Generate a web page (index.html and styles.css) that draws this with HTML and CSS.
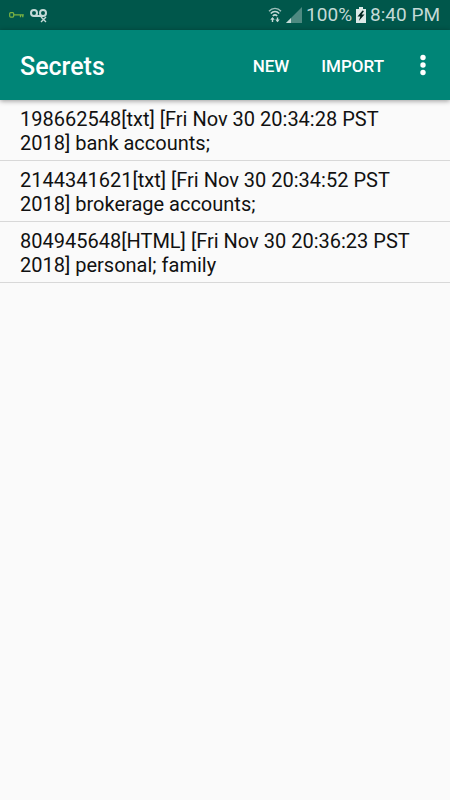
FILE: index.html
```html
<!DOCTYPE html>
<html lang="en">
<head>
<meta charset="utf-8">
<meta name="viewport" content="width=device-width, initial-scale=1">
<title>Secrets</title>
<link rel="stylesheet" href="styles.css">
</head>
<body>
<div class="status">
  <div class="status-group notifications">
    <svg class="icon" width="16" height="8" viewBox="0 0 16 8" fill="none" stroke="#7cb342" aria-hidden="true">
      <rect x=".7" y="1.7" width="4" height="4.4" rx="1" stroke-width="1.2"/>
      <path d="M5 3.8H14.8M11.5 4v2.2M13.8 4v2.2" stroke-width="1.3"/>
    </svg>
    <svg class="icon" width="18" height="16" viewBox="0 0 18 16" fill="none" stroke="#c4dad7" aria-hidden="true">
      <circle cx="4" cy="6" r="3" stroke-width="2"/>
      <circle cx="13" cy="6" r="3" stroke-width="2"/>
      <path d="M4 9h9" stroke-width="2"/>
      <path d="M11 10l5 5M16 10l-5 5" stroke-width="1.4"/>
    </svg>
  </div>
  <div class="status-group">
    <svg class="icon" width="14" height="18" viewBox="0 0 14 18" fill="none" stroke="#c4dad7" aria-hidden="true">
      <path d="M1 5.2C4.3 1.4 9.7 1.4 13 5.2" stroke-width="1.3" opacity=".8"/>
      <path d="M2.8 7.6C5.2 4.9 8.8 4.9 11.2 7.6" stroke-width="1.5"/>
      <path d="M4.8 10C6.2 8.6 7.8 8.6 9.2 10" stroke-width="1.6"/>
      <path d="M4.5 12v4M9.5 11.5v4" stroke-width="1.4"/>
      <path d="M2.3 13.7h4.4L4.5 11zM7.3 13.5h4.4L9.5 16.3z" fill="#c4dad7" stroke="none"/>
    </svg>
    <svg class="icon signal" width="16" height="16" viewBox="0 0 16 16" aria-hidden="true">
      <path d="M16 0v16H0z" fill="#4e8a81"/>
      <path d="M5 11v5H0z" fill="#c4dad7"/>
    </svg>
    <span>100%</span>
    <svg class="icon battery" width="10" height="16" viewBox="0 0 10 16" aria-hidden="true">
      <path d="M3 0h4v2h3v14H0V2h3z" fill="#dce9e7"/>
      <path d="M6.5 3.5L1.5 9.4h2.8L2.8 14 8.5 7.6H5.6L8 4z" fill="#00251f"/>
    </svg>
    <span>8:40 PM</span>
  </div>
</div>
<header class="toolbar">
  <h1>Secrets</h1>
  <button type="button">NEW</button>
  <button type="button">IMPORT</button>
  <button type="button" class="more" aria-label="More options">
    <svg class="icon" width="6" height="22" viewBox="0 0 6 22" fill="#fff" aria-hidden="true">
      <circle cx="3" cy="3.5" r="2.7"/><circle cx="3" cy="11" r="2.7"/><circle cx="3" cy="18.5" r="2.7"/>
    </svg>
  </button>
</header>
<main>
  <ul class="list">
    <li>198662548[txt] [Fri Nov 30 20:34:28 PST 2018] bank accounts;</li>
    <li>2144341621[txt] [Fri Nov 30 20:34:52 PST 2018] brokerage accounts;</li>
    <li>804945648[HTML] [Fri Nov 30 20:36:23 PST 2018] personal; family</li>
  </ul>
</main>
</body>
</html>
```
FILE: styles.css
```css
* {
  box-sizing: border-box;
}

body {
  margin: 0;
  min-height: 100vh;
  background: #fafafa;
  color: #111;
  font-family: Roboto, "Liberation Sans", sans-serif;
}

.icon {
  display: block;
  flex: none;
}

.status {
  display: flex;
  justify-content: space-between;
  align-items: center;
  height: 30px;
  padding: 0 10px 0 9px;
  background: #00574b;
  color: #c4dad7;
  font-size: 19px;
  line-height: 30px;
}

.status-group {
  display: flex;
  align-items: center;
  gap: 4px;
}

.notifications {
  gap: 5px;
}

.toolbar {
  position: relative;
  display: flex;
  align-items: center;
  height: 70px;
  padding: 0 12px 0 20px;
  background: #008577;
  color: #fff;
  box-shadow: 0 1px 5px rgba(0, 0, 0, 0.4);
}

.toolbar h1 {
  flex: 1;
  margin: 4px 0 0;
  font-size: 25px;
  font-weight: 500;
  line-height: 32px;
}

.toolbar button {
  height: 60px;
  padding: 2px 16px 0;
  border: 0;
  background: none;
  color: inherit;
  font: 500 17px/24px Roboto, "Liberation Sans", sans-serif;
}

.toolbar .more {
  padding: 0 12px 0 20px;
}

.list {
  margin: 0;
  padding: 0;
  list-style: none;
}

.list li {
  padding: 7px 20px 5px;
  border-bottom: 1px solid #d8d8d8;
  font-size: 20px;
  line-height: 24px;
}
```
